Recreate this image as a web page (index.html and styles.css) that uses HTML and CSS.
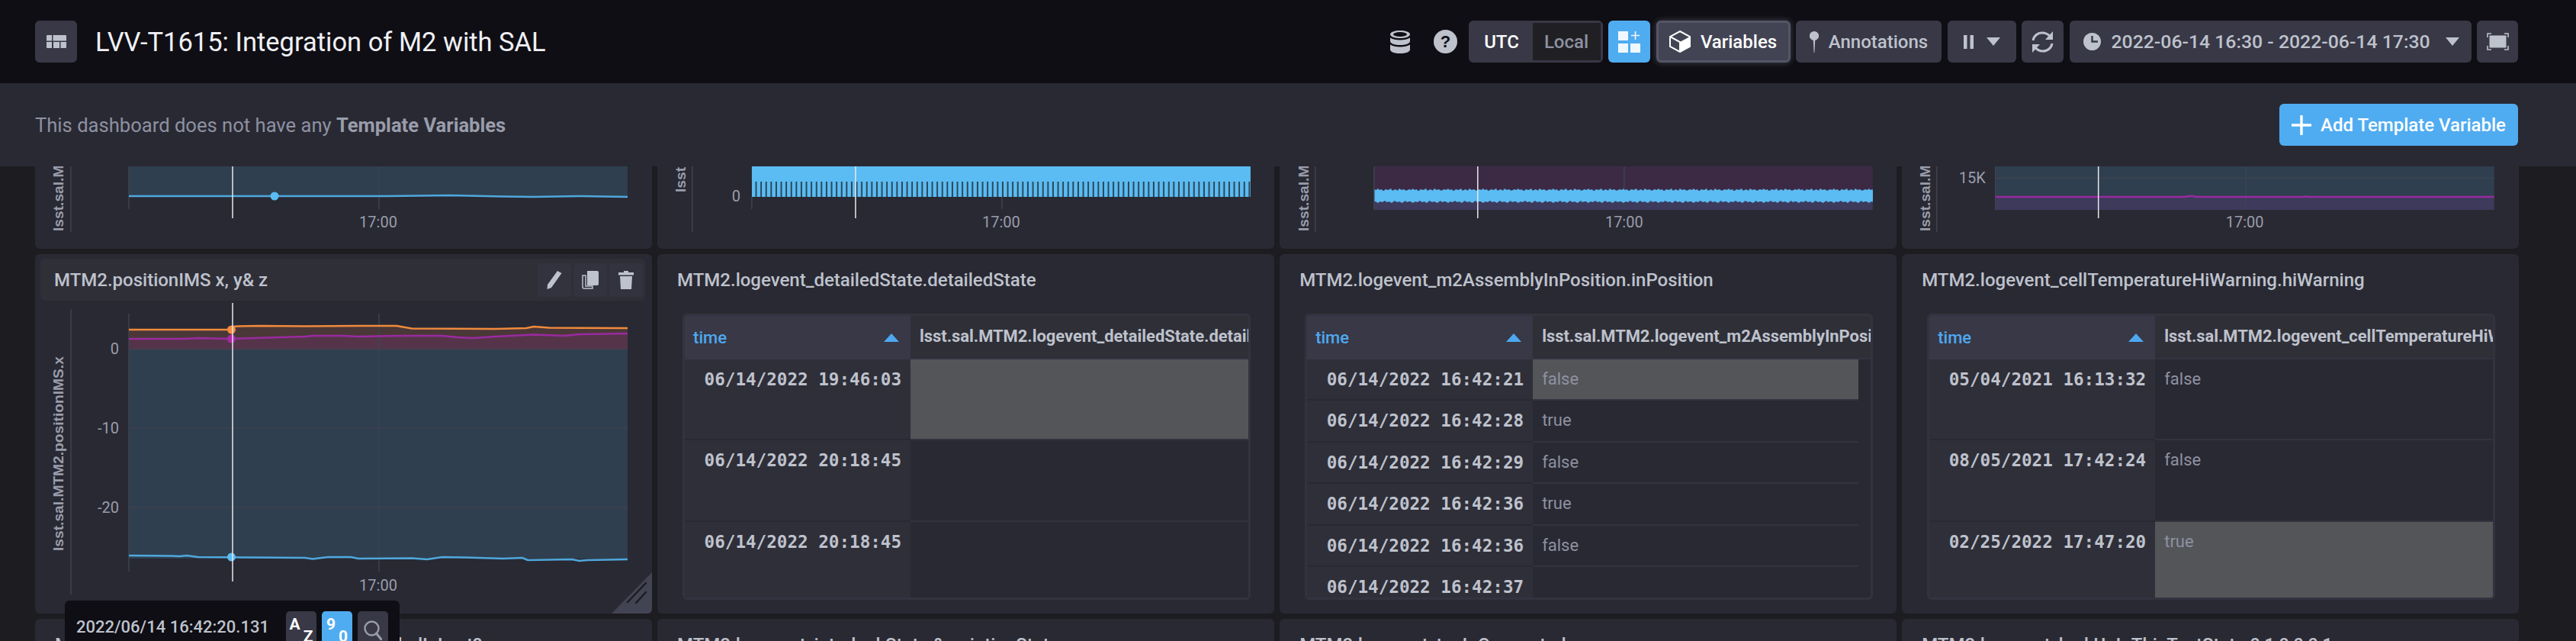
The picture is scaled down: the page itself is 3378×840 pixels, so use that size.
FILE: index.html
```html
<!DOCTYPE html>
<html>
<head>
    <title>LVV-T1615: Integration of M2 with SAL</title>
    <link rel="stylesheet" href="styles.css">
</head>
<body>
    <svg class="defs" width="0" height="0">
        <defs>
            <pattern id="ticks" x="986" y="0" width="6.6" height="40" patternUnits="userSpaceOnUse">
                <rect width="4.6" height="40" fill="#5bbcf3"></rect>
            </pattern>
            <pattern id="noise" x="1802" y="240" width="46" height="30" patternUnits="userSpaceOnUse">
                <path d="M0 8 L3 9 L5 7 L7 9 L10 8 L12 11 L15 8 L19 9 L22 7 L24 10 L28 8 L31 10 L33 7 L36 9 L39 8 L42 10 L46 8 L46 24 L43 25 L41 23 L37 26 L33 24 L30 25 L27 23 L23 26 L20 24 L17 25 L14 23 L11 25 L8 24 L5 26 L2 24 L0 24 Z" fill="#5bbcf3"></path>
            </pattern>
        </defs>
    </svg>

    <div class="topbar">
        <button class="btn btn-square">
            <svg width="26" height="17" viewBox="0 0 26 17"><path class="ico" d="M0 1 Q0 0 1 0 H7 V7.5 H0 Z M8.5 0 H25 Q26 0 26 1 V7.5 H8.5 Z M0 9 H7 V17 H1 Q0 17 0 16 Z M9 9 H17 V17 H9 Z M18.5 9 H26 V16 Q26 17 25 17 H18.5 Z"></path></svg>
        </button>
        <h1 class="title">LVV-T1615: Integration of M2 with SAL</h1>
        <div class="tools">
            <svg class="tool-db" width="26" height="30" viewBox="0 0 26 30"><path class="ico" d="M13 0 C20 0 26 2 26 5 C26 8 20 10 13 10 C6 10 0 8 0 5 C0 2 6 0 13 0 Z M0 9.5 C3 11.5 8 12.5 13 12.5 C18 12.5 23 11.5 26 9.5 V14 C26 17 20 19 13 19 C6 19 0 17 0 14 Z M0 18.5 C3 20.5 8 21.5 13 21.5 C18 21.5 23 20.5 26 18.5 V25 C26 28 20 30 13 30 C6 30 0 28 0 25 Z"></path><ellipse cx="13" cy="5" rx="9" ry="3" fill="#0f0e14"></ellipse></svg>
            <svg class="tool-help" width="31" height="31" viewBox="0 0 31 31"><circle class="ico" cx="15.5" cy="15.5" r="15.5"></circle><text class="help-mark" x="15.5" y="23">?</text></svg>
            <div class="toggle">
                <span class="toggle-on">UTC</span>
                <span class="toggle-off">Local</span>
            </div>
            <button class="btn btn-square btn-blue">
                <svg width="29" height="28" viewBox="0 0 29 28"><path fill="#f0f8ff" d="M0 0 H13 V12 H0 Z M0 16 H13 V28 H0 Z M16 16 H29 V28 H16 Z"></path><path d="M22.5 0 V11 M17 5.5 H28" stroke="#f0f8ff" stroke-width="1.6"></path></svg>
            </button>
            <button class="btn btn-active">
                <svg width="28" height="29" viewBox="0 0 28 29"><path d="M14 1 L27 8 V21 L14 28 L1 21 V8 Z M1 8 L14 15 V28" fill="none" stroke="#fff" stroke-width="2"></path><path d="M14 15 L27 8 V21 L14 28 Z" fill="#fff"></path></svg>
                Variables
            </button>
            <button class="btn btn-annot">
                <svg width="12" height="28" viewBox="0 0 12 28"><path class="ico" d="M6 0 A6 6 0 0 1 7.2 11.9 L6.4 28 H5.6 L4.8 11.9 A6 6 0 0 1 6 0 Z"></path></svg>
                Annotations
            </button>
            <button class="btn btn-pause">
                <svg width="13" height="18" viewBox="0 0 13 18"><path class="ico" d="M0 0 H4.5 V18 H0 Z M8.5 0 H13 V18 H8.5 Z"></path></svg>
                <svg width="18" height="11" viewBox="0 0 18 11"><path class="ico" d="M0 0 H18 L9 11 Z"></path></svg>
            </button>
            <button class="btn btn-square">
                <svg width="31" height="30" viewBox="0 0 31 30"><path d="M3 13 C4 7 9 3 15 3 C19 3 23 5 25.5 8 M28 17 C27 23 22 27 16 27 C12 27 8 25 5.5 22" fill="none" stroke="#bec2cc" stroke-width="3"></path><path class="ico" d="M29 1 V12 H19 Z M2 29 V18 H12 Z"></path></svg>
            </button>
            <button class="btn btn-time">
                <svg width="23" height="23" viewBox="0 0 23 23"><circle class="ico" cx="11.5" cy="11.5" r="11.5"></circle><path d="M11.5 4 V11.5 H19" fill="none" stroke="#383846" stroke-width="2.4"></path></svg>
                <span class="time-label">2022-06-14 16:30 - 2022-06-14 17:30</span>
                <svg width="18" height="11" viewBox="0 0 18 11"><path class="ico" d="M0 0 H18 L9 11 Z"></path></svg>
            </button>
            <button class="btn btn-full">
                <svg width="29" height="23" viewBox="0 0 29 23"><rect class="ico" x="3.5" y="3.5" width="22" height="16"></rect><path d="M1 6 V1 H6 M23 1 H28 V6 M28 17 V22 H23 M6 22 H1 V17" fill="none" stroke="#bec2cc" stroke-width="1.6"></path></svg>
            </button>
        </div>
    </div>

    <div class="varbar">
        <p class="varbar-msg">This dashboard does not have any <strong>Template Variables</strong></p>
        <button class="btn btn-add">
            <svg width="26" height="26" viewBox="0 0 26 26"><path d="M13 1 V25 M1 13 H25" stroke="#fff" stroke-width="3.4" stroke-linecap="round"></path></svg>
            Add Template Variable
        </button>
    </div>

    <div class="dash">
        <!-- top row, scrolled mostly out of view -->
        <div class="panel panel-clipped">
            <svg width="808.8" height="108" viewBox="46 218 808.8 108">
                <rect class="plot-blue" x="169" y="218" width="654" height="39"></rect>
                <path class="tick" d="M169 218 V274 M497 218 V274 M93 218 V304"></path>
                <polyline class="line-blue" points="169,257 300,257 360,257 500,257 590,256 660,257.5 700,258 760,257 823,258"></polyline>
                <circle cx="360" cy="257" r="5.5" fill="#5bbcf3"></circle>
                <path class="cross" d="M305 218 V286"></path>
                <text class="axis-name" transform="translate(83,303) rotate(-90)">lsst.sal.MTM2.positionIMS.z</text>
                <text class="axis-x" x="496" y="298">17:00</text>
            </svg>
        </div>
        <div class="panel panel-clipped">
            <svg width="808.8" height="108" viewBox="862.1 218 808.8 108">
                <rect x="986" y="238" width="654" height="20" fill="#2b4658"></rect>
                <rect x="986" y="218" width="654" height="20" fill="#5bbcf3"></rect>
                <rect x="986" y="238" width="654" height="20" fill="url(#ticks)"></rect>
                <path class="tick" d="M986 258 V274 M1314 258 V274 M908 218 V304"></path>
                <path class="cross" d="M1122 218 V286"></path>
                <text class="axis-name" transform="translate(899,252) rotate(-90)">lsst</text>
                <text class="axis-y" x="971" y="264">0</text>
                <text class="axis-x" x="1313" y="298">17:00</text>
            </svg>
        </div>
        <div class="panel panel-clipped">
            <svg width="808.8" height="108" viewBox="1678.2 218 808.8 108">
                <rect x="1802" y="218" width="654" height="31" fill="#3c2a45"></rect>
                <rect x="1802" y="249" width="654" height="26" fill="#3d3a5c"></rect>
                <rect x="1802" y="240" width="654" height="30" fill="url(#noise)"></rect>
                <rect x="1802" y="250" width="654" height="13" fill="#5bbcf3"></rect>
                <path class="tick" d="M1802 218 V275 M2130 218 V248 M2130 266 V275 M1725 218 V304"></path>
                <path class="cross" d="M1938 218 V286"></path>
                <text class="axis-name" transform="translate(1716,303) rotate(-90)">lsst.sal.MTM2.positionIMS.z</text>
                <text class="axis-x" x="2130" y="298">17:00</text>
            </svg>
        </div>
        <div class="panel panel-clipped">
            <svg width="808.8" height="108" viewBox="2494.3 218 808.8 108">
                <rect class="plot-blue" x="2617" y="218" width="654" height="40"></rect>
                <rect x="2617" y="258" width="654" height="17" fill="#3d3a5c"></rect>
                <path class="tick" d="M2617 218 V275 M2945 218 V275 M2540 218 V304 M2617 233.500 H3271"></path>
                <polyline class="line-purple" points="2617,258 2866,258 2870,257 2876,257 2880,258 3020,258 3023,257.500 3027,258 3271,258"></polyline>
                <path class="cross" d="M2752 218 V286"></path>
                <text class="axis-name" transform="translate(2531,303) rotate(-90)">lsst.sal.MTM2.positionIMS.z</text>
                <text class="axis-y" x="2604" y="240">15K</text>
                <text class="axis-x" x="2944" y="298">17:00</text>
            </svg>
        </div>

        <!-- main row -->
        <div class="panel">
            <div class="panel-head">
                <span class="panel-head-title">MTM2.positionIMS x, y&amp; z</span>
                <span class="head-btn">
                    <svg width="20" height="24" viewBox="0 0 20 24"><path class="ico" d="M14 0 L19.500 3 L6 22 L0.500 24 L1 18 Z"></path></svg>
                </span>
                <span class="head-btn">
                    <svg width="22" height="24" viewBox="0 0 22 24"><path class="ico" d="M7 0 H20 Q22 0 22 2 V17 Q22 19 20 19 H7 Z"></path><path d="M1 6 H5 V20 H14 V23 H3 Q1 23 1 21 Z" fill="none" stroke="#bec2cc" stroke-width="1.500"></path></svg>
                </span>
                <span class="head-btn">
                    <svg width="20" height="24" viewBox="0 0 20 24"><path class="ico" d="M7 0 H13 V2 H20 V5.500 H0 V2 H7 Z M2 7 H18 L17 24 H3 Z"></path></svg>
                </span>
            </div>
            <svg class="chart" width="808.8" height="409" viewBox="46 395 808.8 409">
                <rect class="plot-blue" x="169" y="459" width="654" height="274"></rect>
                <polygon fill="#4a3838" points="169,433 300,433 305,429 400,428.500 520,428 540,431.500 690,431 700,429 720,430.500 823,431 823,459 169,459"></polygon>
                <polygon fill="#55344a" points="169,445 240,445 262,444 300,445 400,442 410,441 470,442 580,441 620,444 690,440 740,441 760,439 823,438 823,459 169,459"></polygon>
                <polygon fill="#292933" points="169,734 225,735 260,734 400,735 430,734 560,736 692,737 823,736 823,740 169,740"></polygon>
                <path class="tick" d="M169 412 V750 M497 412 V750 M93 406 V780 M169 562 H823 M169 666 H823 M169 459 H823"></path>
                <polyline class="line-orange" points="169,433 236,433 270,433 300,433 305,429 312,428.500 340,428 400,428.500 470,428 520,428 540,431.500 650,432 690,431 700,429 720,430.500 823,431"></polyline>
                <polyline class="line-purple" points="169,445 240,445 262,444 300,445 400,442 410,441 450,441 470,442 530,441 580,441 600,443 620,444 650,442 690,440 700,439.500 740,441 760,439 823,438"></polyline>
                <polyline class="line-blue" points="169,729 225,729.500 235,730 245,729 260,731 400,732 410,733.500 430,731 460,731 470,733 540,732.500 560,734 580,731 610,731.500 660,733 685,732 692,735 750,734 760,736 770,735 823,734"></polyline>
                <circle cx="303.500" cy="433" r="5.500" fill="#f58c3e"></circle>
                <circle cx="303.500" cy="445" r="5.500" fill="#a82aa8"></circle>
                <circle cx="303.500" cy="731" r="5.500" fill="#5bbcf3"></circle>
                <path class="cross" d="M305 398 V763"></path>
                <text class="axis-name" transform="translate(83,723) rotate(-90)">lsst.sal.MTM2.positionIMS.x</text>
                <text class="axis-y" x="156" y="465">0</text>
                <text class="axis-y" x="156" y="569">-10</text>
                <text class="axis-y" x="156" y="673">-20</text>
                <text class="axis-x" x="496" y="775">17:00</text>
            </svg>
            <svg class="resize" width="53" height="54" viewBox="0 0 53 54"><path d="M53 0 V50 Q53 54 49 54 H0 Z" fill="#434453"></path><path d="M22 46 L46 21 M33 47 L46 33" stroke="#1c1c21" stroke-width="2.500" stroke-linecap="round" transform="translate(-1,-7)"></path></svg>
        </div>
        <div class="panel">
            <div class="panel-title">MTM2.logevent_detailedState.detailedState</div>
            <div class="tbl">
                <div class="tr tr-head"><div class="th-time">time<span class="caret"></span></div><div class="th-val">lsst.sal.MTM2.logevent_detailedState.detailedState</div></div>
                <div class="tr tr-tall"><div class="td-time">06/14/2022 19:46:03</div><div class="td-val td-hi"></div></div>
                <div class="tr tr-tall"><div class="td-time">06/14/2022 20:18:45</div><div class="td-val"></div></div>
                <div class="tr tr-tall"><div class="td-time">06/14/2022 20:18:45</div><div class="td-val"></div></div>
            </div>
        </div>
        <div class="panel">
            <div class="panel-title">MTM2.logevent_m2AssemblyInPosition.inPosition</div>
            <div class="tbl tbl-scroll">
                <div class="tr tr-head"><div class="th-time">time<span class="caret"></span></div><div class="th-val">lsst.sal.MTM2.logevent_m2AssemblyInPosition.inPosition</div></div>
                <div class="tr"><div class="td-time">06/14/2022 16:42:21</div><div class="td-val td-hi">false</div></div>
                <div class="tr"><div class="td-time">06/14/2022 16:42:28</div><div class="td-val">true</div></div>
                <div class="tr"><div class="td-time">06/14/2022 16:42:29</div><div class="td-val">false</div></div>
                <div class="tr"><div class="td-time">06/14/2022 16:42:36</div><div class="td-val">true</div></div>
                <div class="tr"><div class="td-time">06/14/2022 16:42:36</div><div class="td-val">false</div></div>
                <div class="tr"><div class="td-time">06/14/2022 16:42:37</div><div class="td-val"></div></div>
            </div>
        </div>
        <div class="panel">
            <div class="panel-title">MTM2.logevent_cellTemperatureHiWarning.hiWarning</div>
            <div class="tbl">
                <div class="tr tr-head"><div class="th-time">time<span class="caret"></span></div><div class="th-val">lsst.sal.MTM2.logevent_cellTemperatureHiWarning.hiWarning</div></div>
                <div class="tr tr-tall"><div class="td-time">05/04/2021 16:13:32</div><div class="td-val">false</div></div>
                <div class="tr tr-tall"><div class="td-time">08/05/2021 17:42:24</div><div class="td-val">false</div></div>
                <div class="tr tr-tall"><div class="td-time">02/25/2022 17:47:20</div><div class="td-val td-hi">true</div></div>
            </div>
        </div>

        <!-- next row, only the title tops show -->
        <div class="panel"><div class="panel-title">MTM2.logevent_forceBalanceStatus.enabledInLast?</div></div>
        <div class="panel"><div class="panel-title">MTM2.logevent_interlockState &amp; pointingState</div></div>
        <div class="panel"><div class="panel-title">MTM2.logevent_tcpIpConnected</div></div>
        <div class="panel"><div class="panel-title">MTM2.logevent_lookUpInThisTestState 0,1,0,0,0,1</div></div>

        <div class="legend">
            <span class="legend-time">2022/06/14 16:42:20.131</span>
            <span class="sort-btn"><span class="sort-a">A</span><span class="sort-b">Z</span></span>
            <span class="sort-btn sort-on"><span class="sort-a">9</span><span class="sort-b">0</span></span>
            <span class="sort-btn">
                <svg width="24" height="26" viewBox="0 0 24 26"><circle cx="10.500" cy="10.500" r="9" fill="none" stroke="#999dab" stroke-width="2.400"></circle><path d="M16.500 17 L23 25" stroke="#999dab" stroke-width="3" stroke-linecap="round"></path></svg>
            </span>
        </div>
    </div>
</body>
</html>
```

FILE: styles.css
```css
html, body { margin: 0; height: 840px; overflow: hidden; background: #1c1c21; font-family: Roboto, "Liberation Sans", sans-serif; }
.defs { position: absolute; }
.ico { fill: #bec2cc; }
svg { flex: none; }

/* top bar */
.topbar { display: flex; align-items: center; height: 109px; box-sizing: border-box; padding: 0 76px 0 46px; background: #0f0e14; }
.title { flex: 1; margin: 0 0 0 24px; font-size: 34.500px; font-weight: 400; color: #f0f0f4; }
.tools { display: flex; align-items: center; gap: 7.500px; }
.tool-db { margin-right: 23.500px; }
.tool-help { margin-right: 7px; }

.btn { display: flex; align-items: center; justify-content: center; height: 55px; box-sizing: border-box; padding: 0; border: none; border-radius: 6px; background: #383846; color: #bec2cc; font-family: Roboto, sans-serif; font-size: 24px; font-weight: 500; }
.btn-square { width: 55px; }
.btn-full { width: 54px; }
.btn-blue { background: #50acf0; }
.btn-active { gap: 13px; width: 176px; border: 3px solid #545667; background: #434453; color: #fff; box-shadow: 0 0 8px rgba(190, 194, 204, 0.3); }
.btn-annot { gap: 13px; width: 191px; }
.btn-pause { gap: 17px; width: 90px; }
.btn-time { justify-content: flex-start; gap: 14px; width: 527px; padding-left: 18px; }
.time-label { font-size: 24.800px; margin-right: 6px; }
.btn-add { gap: 12px; width: 313px; background: #50acf0; color: #fff; }

.toggle { display: flex; width: 176px; height: 55px; box-sizing: border-box; border: 3px solid #383846; border-radius: 6px; background: #383846; font-size: 24px; font-weight: 500; }
.toggle-on { display: flex; align-items: center; justify-content: center; width: 81px; color: #fff; }
.toggle-off { display: flex; align-items: center; justify-content: center; flex: 1; background: #202024; color: #8e91a1; }

/* template variables bar */
.varbar { display: flex; align-items: center; justify-content: space-between; height: 109px; box-sizing: border-box; padding: 0 76px 0 46px; background: #292933; }
.varbar-msg { margin: 0; font-size: 25.600px; color: #8e91a1; }
.varbar-msg strong { font-weight: 700; color: #999dab; }

/* dashboard */
.dash { position: relative; display: grid; grid-template-columns: repeat(4, 1fr); grid-template-rows: 108px 471px 100px; gap: 7px 7.300px; padding: 0 75px 0 46px; }
.panel { position: relative; overflow: hidden; border-radius: 6px; background: #292933; }
.panel-clipped { border-radius: 0 0 6px 6px; }
.panel-clipped svg { display: block; }

.panel-head { display: flex; align-items: center; gap: 3px; height: 55px; box-sizing: border-box; margin: 6px 9px 0 7px; padding: 0 3px 0 18px; border-radius: 6px; background: #2f2f38; }
.panel-head-title { flex: 1; font-size: 24px; font-weight: 500; color: #bec2cc; }
.head-btn { display: flex; align-items: center; justify-content: center; width: 44px; height: 44px; border-radius: 5px; background: #333340; }
.chart { display: block; }
.resize { position: absolute; right: 0; bottom: 0; }

.panel-title { margin: 20px 0 0 26px; height: 28px; font-size: 24px; line-height: 28px; font-weight: 500; color: #bec2cc; white-space: nowrap; }

/* chart bits */
.plot-blue { fill: #2f3f4f; }
.tick { fill: none; stroke: #3c4350; stroke-width: 1.500; }
.cross { stroke: #e7e8eb; stroke-width: 1.500; }
.line-blue { fill: none; stroke: #4fa8dd; stroke-width: 2.500; }
.line-orange { fill: none; stroke: #f08a3c; stroke-width: 2.500; }
.line-purple { fill: none; stroke: #9a2aa0; stroke-width: 2.500; }
.axis-name { font-family: "Liberation Sans", sans-serif; font-size: 19.200px; font-weight: 700; fill: #999dab; }
.axis-y { font-size: 20px; text-anchor: end; fill: #999dab; }
.axis-x { font-size: 20px; text-anchor: middle; fill: #999dab; }
.help-mark { font-family: "Liberation Sans", sans-serif; font-size: 22px; font-weight: 700; text-anchor: middle; fill: #0f0e14; }

/* tables */
.tbl { display: flex; flex-direction: column; height: 375px; width: 745px; box-sizing: border-box; margin: 30px 0 0 33px; overflow: hidden; border: 3px solid #333340; border-radius: 6px; background: #292933; }
.tr { display: grid; flex: none; grid-template-columns: 296px 1fr; height: 54.500px; }
.tr-head { height: 56.500px; }
.tr-tall { height: 106.500px; }
.tbl-scroll .tr { margin-right: 16px; }
.tbl-scroll .tr-head { margin-right: 0; }

.th-time { display: flex; align-items: center; justify-content: space-between; padding: 0 15px 0 11px; background: #383846; font-size: 22px; font-weight: 500; color: #4ea8ef; }
.th-val { padding-left: 12px; overflow: hidden; background: #2f2f38; border-bottom: 2px solid #333340; font-size: 21.900px; font-weight: 700; line-height: 54px; color: #bec2cc; white-space: nowrap; }
.caret { width: 0; height: 0; border-left: 10px solid transparent; border-right: 10px solid transparent; border-bottom: 11px solid #4ea8ef; }

.td-time { box-sizing: border-box; padding-right: 12px; background: #2f2f39; border-bottom: 2px solid #292933; font-family: "DejaVu Sans Mono", "Liberation Mono", monospace; font-size: 22.600px; font-weight: 700; line-height: 52px; color: #bec2cc; text-align: right; white-space: nowrap; }
.td-val { box-sizing: border-box; padding-left: 12px; border-bottom: 2px solid #333340; font-size: 22px; line-height: 52px; color: #8e91a1; }
.td-hi { background: #545559; }

/* hover legend */
.legend { position: absolute; left: 85px; top: 569px; display: flex; align-items: flex-start; width: 439px; height: 70px; box-sizing: border-box; padding: 14px 0 0 15px; border-radius: 6px; background: #0f0e14; }
.legend-time { width: 275px; font-size: 22px; font-weight: 500; line-height: 42px; color: #bec2cc; white-space: nowrap; }
.sort-btn { display: flex; align-items: center; justify-content: center; width: 40px; height: 50px; margin-right: 7px; border-radius: 5px; background: #383846; font-size: 21px; font-weight: 700; color: #fff; }
.sort-on { background: #50acf0; }
.sort-a { margin: -16px 2px 0 -2px; }
.sort-b { margin: 16px -2px 0 2px; }
```
